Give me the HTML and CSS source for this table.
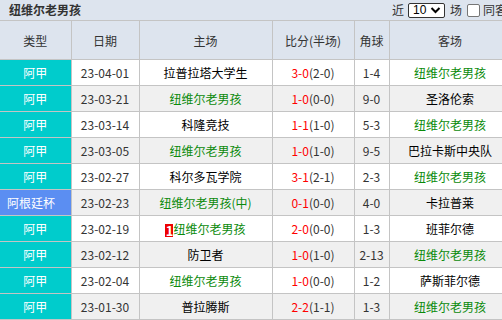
FILE: index.html
```html
<!DOCTYPE html>
<html>
<head>
<meta charset="utf-8">
<link rel="stylesheet" href="styles.css">
</head>
<body>
<div class="page">
  <div class="titlebar">
    <span class="title">纽维尔老男孩</span>
    <div class="ctrls">
      <span class="lbl">近</span>
      <span class="sel"><span class="selv">10</span><svg class="chev" width="11" height="8" viewBox="0 0 11 8"><path d="M1.5 2 L5.5 6 L9.5 2" fill="none" stroke="#000" stroke-width="2"/></svg></span>
      <span class="lbl">场</span>
      <span class="cb"></span>
      <span class="lbl tight">同客</span>
    </div>
  </div>
  <table class="tbl">
    <colgroup>
      <col class="c1"><col class="c2"><col class="c3"><col class="c4"><col class="c5"><col class="c6">
    </colgroup>
    <thead>
      <tr><th>类型</th><th>日期</th><th>主场</th><th>比分(半场)</th><th>角球</th><th>客场</th></tr>
    </thead>
    <tbody>
      <tr><td class="lg">阿甲</td><td>23-04-01</td><td class="blk">拉普拉塔大学生</td><td><span class="red">3-0</span>(2-0)</td><td>1-4</td><td class="grn">纽维尔老男孩</td></tr>
      <tr class="alt"><td class="lg">阿甲</td><td>23-03-21</td><td class="grn">纽维尔老男孩</td><td><span class="red">1-0</span>(0-0)</td><td>9-0</td><td class="blk">圣洛伦索</td></tr>
      <tr><td class="lg">阿甲</td><td>23-03-14</td><td class="blk">科隆竞技</td><td><span class="red">1-1</span>(1-0)</td><td>5-3</td><td class="grn">纽维尔老男孩</td></tr>
      <tr class="alt"><td class="lg">阿甲</td><td>23-03-05</td><td class="grn">纽维尔老男孩</td><td><span class="red">1-0</span>(1-0)</td><td>9-5</td><td class="blk">巴拉卡斯中央队</td></tr>
      <tr><td class="lg">阿甲</td><td>23-02-27</td><td class="blk">科尔多瓦学院</td><td><span class="red">3-1</span>(2-1)</td><td>2-3</td><td class="grn">纽维尔老男孩</td></tr>
      <tr class="alt"><td class="lg cup">阿根廷杯</td><td>23-02-23</td><td class="grn">纽维尔老男孩(中)</td><td><span class="red">0-1</span>(0-0)</td><td>4-0</td><td class="blk">卡拉普莱</td></tr>
      <tr><td class="lg">阿甲</td><td>23-02-19</td><td class="grn"><span class="badge">1</span>纽维尔老男孩</td><td><span class="red">2-0</span>(0-0)</td><td>1-3</td><td class="blk">班菲尔德</td></tr>
      <tr class="alt"><td class="lg">阿甲</td><td>23-02-12</td><td class="blk">防卫者</td><td><span class="red">1-0</span>(1-0)</td><td>2-13</td><td class="grn">纽维尔老男孩</td></tr>
      <tr><td class="lg">阿甲</td><td>23-02-04</td><td class="grn">纽维尔老男孩</td><td><span class="red">1-0</span>(0-0)</td><td>1-2</td><td class="blk">萨斯菲尔德</td></tr>
      <tr class="alt"><td class="lg">阿甲</td><td>23-01-30</td><td class="blk">普拉腾斯</td><td><span class="red">2-2</span>(1-1)</td><td>1-3</td><td class="grn">纽维尔老男孩</td></tr>
    </tbody>
  </table>
</div>
</body>
</html>
```
FILE: styles.css
```css
html, body {
  margin: 0;
  padding: 0;
  background: #fff;
}
.page {
  width: 502px;
  height: 320px;
  overflow: hidden;
  font-family: "Noto Sans CJK SC", "Noto Sans", sans-serif;
  font-size: 12px;
  color: #333;
}
.titlebar {
  height: 20px;
  background: #dde4ee;
  display: flex;
  align-items: center;
  justify-content: space-between;
  width: 530px;
}
.title {
  font-weight: bold;
  color: #333;
  padding-left: 9px;
  font-size: 12px;
  line-height: 20px;
}
.ctrls {
  display: flex;
  align-items: center;
  gap: 4px;
  padding-right: 23px;
}
.lbl {
  color: #333;
  line-height: 20px;
}
.lbl.tight {
  margin-left: -1px;
}
.sel {
  height: 13px;
  border: 1px solid #333;
  border-radius: 2px;
  background: #fff;
  display: flex;
  align-items: center;
  justify-content: space-between;
  padding: 0 3px 0 4px;
  box-sizing: content-box;
  width: 28px;
  margin-right: 1px;
}
.selv {
  font-family: "Liberation Sans", sans-serif;
  font-size: 12px;
  line-height: 13px;
  color: #000;
}
.chev {
  display: block;
}
.cb {
  width: 11px;
  height: 11px;
  border: 1px solid #767676;
  border-radius: 2px;
  background: #fff;
  margin-left: 1px;
}
.tbl {
  border-collapse: collapse;
  table-layout: fixed;
  width: 511px;
}
.c1 { width: 71px; }
.c2 { width: 68px; }
.c3 { width: 133px; }
.c4 { width: 82px; }
.c5 { width: 35px; }
.c6 { width: 122px; }
.tbl th, .tbl td {
  border: 1px solid #c4c4c4;
  text-align: center;
  padding: 0;
  white-space: nowrap;
  overflow: hidden;
}
.tbl th {
  height: 38px;
  background: #dde4ee;
  font-weight: normal;
  color: #333;
}
.tbl td {
  height: 25px;
  background: #fff;
}
.tbl th:first-child, .tbl td:first-child { border-left: none; }
.tbl tr.alt td { background: #f0f0f0; }
.tbl td.lg, .tbl tr.alt td.lg {
  background: #00cccc;
  color: #fff;
}
.tbl td.cup, .tbl tr.alt td.cup {
  background: #5b8ef2;
  text-align: left;
  padding-left: 7px;
}
.blk { color: #000; }
.grn { color: #0a8a0a; }
.red { color: #ff0000; }
.badge {
  display: inline-block;
  background: #ee0000;
  color: #fff;
  font-weight: bold;
  width: 8px;
  height: 13px;
  line-height: 13px;
  font-size: 13px;
  text-align: center;
  vertical-align: -2px;
}
```
